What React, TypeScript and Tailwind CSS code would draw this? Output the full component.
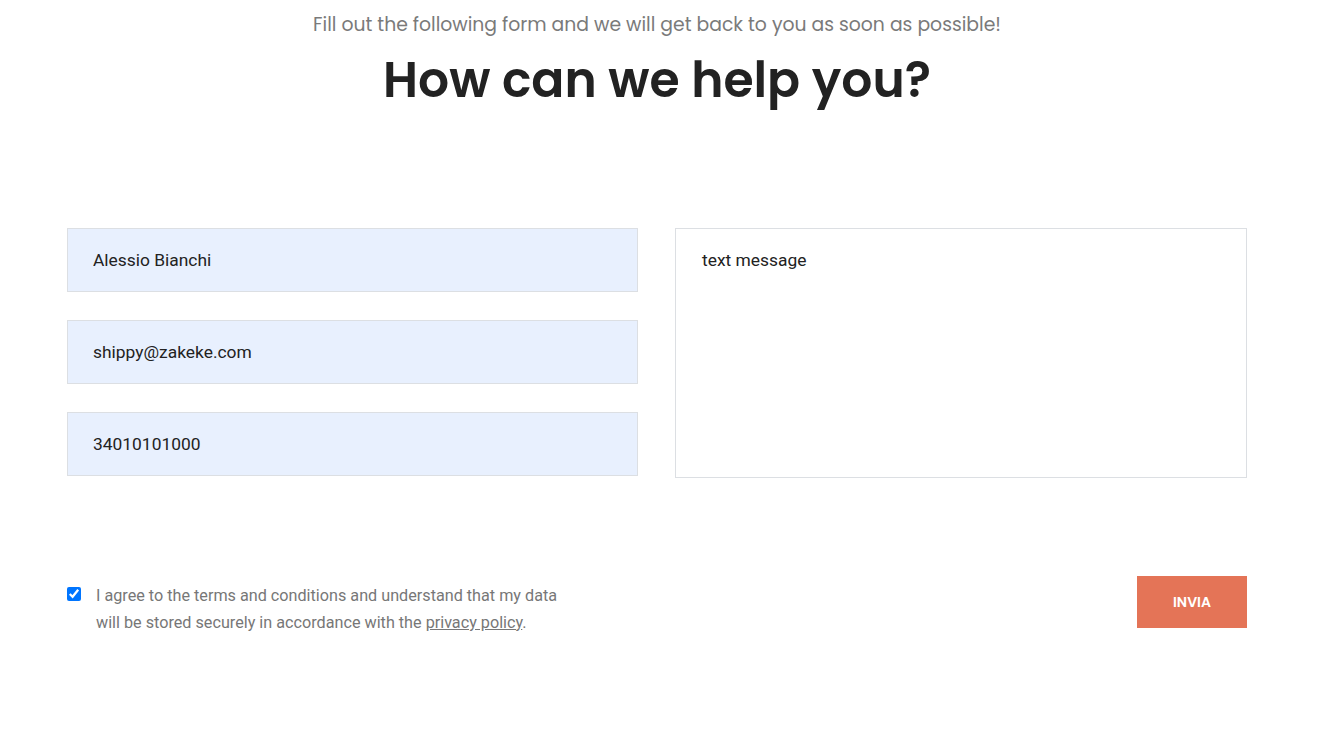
import { useState } from "react";

const inputClass =
  "w-full h-[64px] px-[25px] bg-[#e8f0fe] border border-[#dcdfe3] text-[17.4px] text-[#222] outline-none";

export default function App() {
  const [agree, setAgree] = useState(true);
  const [name, setName] = useState("Alessio Bianchi");
  const [email, setEmail] = useState("shippy@zakeke.com");
  const [phone, setPhone] = useState("34010101000");
  const [message, setMessage] = useState("text message");

  return (
    <div className="min-h-screen bg-white font-['Roboto',sans-serif]">
      <div className="w-[1314px]">
        {/* Heading */}
        <div className="flex flex-col items-center pt-[10px]">
          <p className="text-[18.8px] leading-[30px] text-[#7a7a7a] font-['Poppins','Lato',sans-serif]">
            Fill out the following form and we will get back to you as soon as possible!
          </p>
          <h1 className="mt-[10px] text-[48.8px] leading-[60px] font-semibold text-[#222] font-['Poppins','Lato',sans-serif]">
            How can we help you?
          </h1>
        </div>

        {/* Form */}
        <form
          className="mx-auto w-[1180px] mt-[118px]"
          onSubmit={(e) => e.preventDefault()}
        >
          <div className="grid grid-cols-[571px_572px] gap-[37px]">
            <div className="flex flex-col gap-[28px]">
              <input className={inputClass} value={name} onChange={(e) => setName(e.target.value)} />
              <input className={inputClass} value={email} onChange={(e) => setEmail(e.target.value)} />
              <input className={inputClass} value={phone} onChange={(e) => setPhone(e.target.value)} />
            </div>
            <textarea
              className="w-full h-[250px] px-[26px] pt-[18px] bg-white border border-[#dcdfe3] text-[17.4px] leading-[26px] text-[#222] outline-none resize-none"
              value={message}
              onChange={(e) => setMessage(e.target.value)}
            />
          </div>

          <div className="flex justify-between items-start mt-[104px]">
            <label className="flex items-start gap-[15px]">
              <input
                type="checkbox"
                checked={agree}
                onChange={(e) => setAgree(e.target.checked)}
                className="mt-[5px] w-[14px] h-[14px] accent-[#0075ff]"
              />
              <span className="max-w-[470px] text-[16.2px] leading-[27px] text-[#777]">
                I agree to the terms and conditions and understand that my data will be stored securely in accordance with the{" "}
                <a href="#" className="underline">privacy policy</a>.
              </span>
            </label>
            <button
              type="submit"
              className="mt-[-6px] w-[110px] h-[52px] bg-[#e47457] text-white text-[14px] font-semibold font-['Poppins','Lato',sans-serif]"
            >
              INVIA
            </button>
          </div>
        </form>
      </div>
    </div>
  );
}
